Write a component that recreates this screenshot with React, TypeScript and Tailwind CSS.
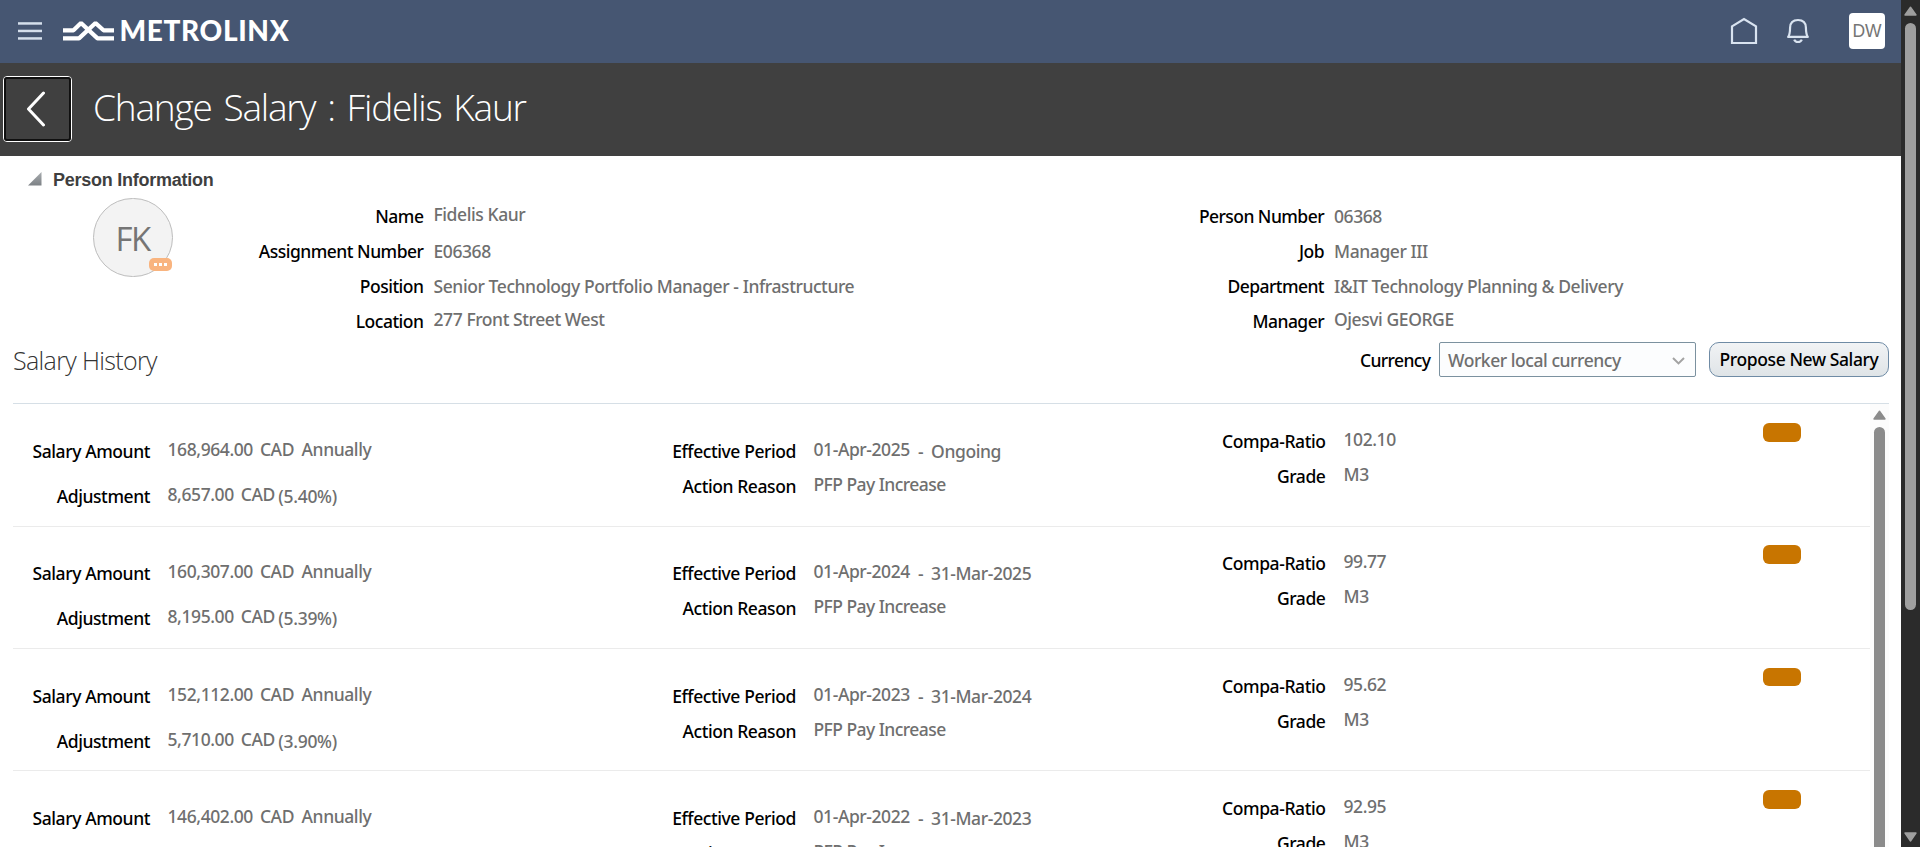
import React from "react";

type FieldProps = {
  label: string;
  labelWidth: string;
  gap: string;
  raised?: boolean;
  children: React.ReactNode;
};

function Field({ label, labelWidth, gap, raised = true, children }: FieldProps) {
  return (
    <div className={`flex h-[26px] shrink-0 items-start ${gap}`}>
      <div className={`${labelWidth} shrink-0 pt-[2px] text-right text-black`}>{label}</div>
      <div className={`flex text-[#6f6f6f] ${raised ? "" : "pt-[2px]"}`}>{children}</div>
    </div>
  );
}

type Salary = {
  amount: string;
  adjustment?: string;
  percent?: string;
  from: string;
  to: string;
  reason: string;
  ratio: string;
  grade: string;
};

const HISTORY: Salary[] = [
  { amount: "168,964.00", adjustment: "8,657.00", percent: "(5.40%)", from: "01-Apr-2025", to: "Ongoing", reason: "PFP Pay Increase", ratio: "102.10", grade: "M3" },
  { amount: "160,307.00", adjustment: "8,195.00", percent: "(5.39%)", from: "01-Apr-2024", to: "31-Mar-2025", reason: "PFP Pay Increase", ratio: "99.77", grade: "M3" },
  { amount: "152,112.00", adjustment: "5,710.00", percent: "(3.90%)", from: "01-Apr-2023", to: "31-Mar-2024", reason: "PFP Pay Increase", ratio: "95.62", grade: "M3" },
  { amount: "146,402.00", from: "01-Apr-2022", to: "31-Mar-2023", reason: "PFP Pay Increase", ratio: "92.95", grade: "M3" },
];

function HistoryRow({ row }: { row: Salary }) {
  return (
    <div className="flex h-[122.33px] shrink-0 border-b border-[#ebebeb]">
      <div className="flex w-[640px] flex-col gap-[19px] pt-[32.73px]">
        <Field label="Salary Amount" labelWidth="w-[137px]" gap="gap-[17.5px]">
          <span>{row.amount}</span>
          <span className="ml-[7px]">CAD</span>
          <span className="ml-[7.5px]">Annually</span>
        </Field>
        {row.adjustment && (
          <Field label="Adjustment" labelWidth="w-[137px]" gap="gap-[17.5px]">
            <span>{row.adjustment}</span>
            <span className="ml-[7px]">CAD</span>
            <span className="ml-[3.5px] pt-[2px] tracking-[-0.3px]">{row.percent}</span>
          </Field>
        )}
      </div>
      <div className="flex w-[560px] flex-col gap-[9px] pt-[32.73px]">
        <Field label="Effective Period" labelWidth="w-[143px]" gap="gap-[17.5px]">
          <span>{row.from}</span>
          <span className="ml-[8px] pt-[2px]">-</span>
          <span className="ml-[8px] pt-[2px]">{row.to}</span>
        </Field>
        <Field label="Action Reason" labelWidth="w-[143px]" gap="gap-[17.5px]"><span className="tracking-[-0.55px]">{row.reason}</span></Field>
      </div>
      <div className="flex w-[550px] flex-col gap-[9px] pt-[22.73px]">
        <Field label="Compa-Ratio" labelWidth="w-[112.5px]" gap="gap-[18px]">{row.ratio}</Field>
        <Field label="Grade" labelWidth="w-[112.5px]" gap="gap-[18px]">{row.grade}</Field>
      </div>
      <div className="mt-[18.9px] h-[18.5px] w-[38px] rounded-[6px] bg-[#c87500]" />
    </div>
  );
}

function Logo() {
  return (
    <div className="flex items-center">
      <svg className="-mt-[2px]" width="51" height="22" viewBox="0 0 51 22" fill="none" stroke="#fff" strokeWidth="4.2" strokeLinejoin="bevel">
        <path d="M0 10.3H10.5L18 3L34.5 18.4H51" />
        <path d="M0 18.4H16L32.5 3L40.5 10.3H51" />
      </svg>
      <span className="-mt-[3px] ml-[6px] font-['Lato',sans-serif] text-[28px] leading-[30px] font-black tracking-[0.65px] text-white">METROLINX</span>
    </div>
  );
}

function PageScrollbar() {
  return (
    <div className="flex w-[19px] shrink-0 flex-col items-center bg-[#2b2b2b] pt-[6px] pb-[5px]">
      <svg width="13" height="10" viewBox="0 0 13 10"><path d="M6.5 1.2L12 9H1Z" fill="#9f9f9f" stroke="#9f9f9f" strokeWidth="1.4" strokeLinejoin="round" /></svg>
      <div className="mt-[7px] h-[587px] w-[11px] rounded-full bg-[#9f9f9f]" />
      <svg className="mt-auto" width="13" height="10" viewBox="0 0 13 10"><path d="M6.5 9L12 1H1Z" fill="#9f9f9f" stroke="#9f9f9f" strokeWidth="1.4" strokeLinejoin="round" /></svg>
    </div>
  );
}

export default function App() {
  return (
    <div className="flex h-[847px] w-[1920px] overflow-hidden bg-white font-['Noto_Sans',sans-serif] text-[17.5px] leading-6 font-medium tracking-[-0.42px] whitespace-nowrap">
      <div className="flex w-[1901px] flex-col">
        <header className="flex h-[63px] shrink-0 items-center bg-[#465672] pr-[16px] pl-[18px]">
          <svg className="-mt-px" width="24" height="18" viewBox="0 0 24 18" fill="#d5dfec">
            <rect y="0.2" width="24" height="2.5" />
            <rect y="7.7" width="24" height="2.5" />
            <rect y="15.2" width="24" height="2.5" />
          </svg>
          <div className="ml-[20.5px] flex"><Logo /></div>
          <svg className="-mt-[2px] ml-auto" width="28" height="28" viewBox="0 0 28 28" fill="none" stroke="#d9e3f0" strokeWidth="2.2">
            <path d="M2 9.4L14 2L26 9.4V26H2Z" />
          </svg>
          <svg className="-mt-[2px] ml-[29px]" width="22" height="26" viewBox="0 0 22 26" fill="none" stroke="#d9e3f0" strokeWidth="2.2">
            <path d="M1.2 18.9H20.8C19.3 17 19 14.5 18.9 9.6C18.8 4.6 15.6 2 11 2S3.2 4.6 3.1 9.6C3 14.5 2.7 17 1.2 18.9Z" strokeLinejoin="round" />
            <path d="M7.2 21.6C8.4 24.8 13.6 24.8 14.8 21.6" />
          </svg>
          <div className="-mt-px ml-[40px] flex h-[36px] w-[36px] items-center justify-center rounded-[4px] bg-white font-['Liberation_Sans',sans-serif] text-[17.5px] font-normal tracking-normal text-[#757575]">DW</div>
        </header>

        <div className="flex h-[93px] shrink-0 bg-[#404040] pl-[3px]">
          <button className="mt-[13px] flex h-[66px] w-[69px] items-center justify-center rounded-[4px] border border-white p-0">
            <span className="flex h-full w-full items-center justify-center rounded-[3px] border-2 border-[#101010]">
              <svg className="-ml-[3px]" width="20" height="36" viewBox="0 0 20 36" fill="none" stroke="#fff" strokeWidth="3" strokeLinecap="round" strokeLinejoin="round">
                <path d="M17.5 2L2.5 18L17.5 34" />
              </svg>
            </span>
          </button>
          <h1 className="mt-[17px] ml-[21px] font-['Open_Sans',sans-serif] text-[37px] leading-[54px] font-light tracking-[-1.2px] text-white [word-spacing:3.4px]">Change Salary : Fidelis Kaur</h1>
        </div>

        <main className="flex min-h-0 flex-1 flex-col pl-[13px]">
          <section className="flex h-[186px] shrink-0 flex-col pl-[15px]">
            <div className="flex h-[38px] items-start">
              <svg className="mt-[15.5px]" width="14" height="14" viewBox="0 0 14 14">
                <defs>
                  <linearGradient id="tri" x1="0" y1="0" x2="0" y2="1">
                    <stop offset="0" stopColor="#a8acaf" />
                    <stop offset="1" stopColor="#7d8286" />
                  </linearGradient>
                </defs>
                <path d="M0 13.5H13.5V0Z" fill="url(#tri)" />
              </svg>
              <h2 className="mt-[12px] ml-[11px] font-['Liberation_Sans',sans-serif] text-[18px] leading-6 font-bold tracking-[-0.25px] text-[#3f3f3f]">Person Information</h2>
            </div>
            <div className="flex h-[148px]">
              <div className="relative mt-[4px] ml-[65px] flex h-[79px] w-[80px] items-center justify-center rounded-full border border-[#bdbdbd] bg-[#f3f3f3] font-['Open_Sans',sans-serif] text-[33px] font-normal tracking-[-1.5px] text-[#757575]">
                <span className="pt-[3px] pr-[1px]">FK</span>
                <svg className="absolute top-[59px] left-[55px]" width="23" height="13" viewBox="0 0 23 13">
                  <rect width="23" height="13" rx="5" fill="#f9b47f" />
                  <rect x="5" y="5" width="3" height="3" fill="#fff" />
                  <rect x="10" y="5" width="3" height="3" fill="#fff" />
                  <rect x="15" y="5" width="3" height="3" fill="#fff" />
                </svg>
              </div>
              <div className="flex w-[900px] flex-col gap-[9px] pt-[8px]">
                <Field label="Name" labelWidth="w-[250.5px] tracking-[-0.5px]" gap="gap-[10px]">Fidelis Kaur</Field>
                <Field label="Assignment Number" labelWidth="w-[250.5px] tracking-[-0.5px]" gap="gap-[10px]" raised={false}>E06368</Field>
                <Field label="Position" labelWidth="w-[250.5px] tracking-[-0.5px]" gap="gap-[10px]" raised={false}>Senior Technology Portfolio Manager - Infrastructure</Field>
                <Field label="Location" labelWidth="w-[250.5px] tracking-[-0.5px]" gap="gap-[10px]">277 Front Street West</Field>
              </div>
              <div className="flex flex-col gap-[9px] pt-[8px]">
                <Field label="Person Number" labelWidth="w-[251px] tracking-[-0.55px]" gap="gap-[10px]" raised={false}>06368</Field>
                <Field label="Job" labelWidth="w-[251px] tracking-[-0.55px]" gap="gap-[10px]" raised={false}>Manager III</Field>
                <Field label="Department" labelWidth="w-[251px] tracking-[-0.55px]" gap="gap-[10px]" raised={false}>I&amp;IT Technology Planning &amp; Delivery</Field>
                <Field label="Manager" labelWidth="w-[251px] tracking-[-0.55px]" gap="gap-[10px]">Ojesvi GEORGE</Field>
              </div>
            </div>
          </section>

          <div className="flex h-[35px] w-[1876px] shrink-0 items-center">
            <h2 className="mt-px font-['Open_Sans',sans-serif] text-[25px] font-light tracking-[-0.65px] text-[#333]">Salary History</h2>
            <span className="mt-px ml-auto tracking-[-0.6px] text-black">Currency</span>
            <div className="ml-[8.5px] flex h-[35px] w-[257px] items-center justify-between rounded-[2px] border border-[#7b919f] bg-[#fcfdfe] pr-[10px] pl-[8px] tracking-[-0.45px] text-[#6f6f6f]">
              <span className="mt-px">Worker local currency</span>
              <svg className="mt-[3px]" width="13" height="8" viewBox="0 0 13 8" fill="none" stroke="#a3a3a3" strokeWidth="2"><path d="M1 1L6.5 6.4L12 1" /></svg>
            </div>
            <button className="ml-[13px] flex h-[35px] w-[180px] items-start justify-center rounded-[10px] border border-[#6f8ba5] bg-linear-to-b from-[#f1f3f5] to-[#dfe4e7] pt-[4px] tracking-[-0.4px] text-black">Propose New Salary</button>
          </div>

          <section className="mt-[26px] flex min-h-0 w-[1876px] flex-1 border-t border-[#d6dfe6]">
            <div className="flex w-[1857px] flex-col overflow-hidden pt-[0.27px]">
              {HISTORY.map((row) => (
                <HistoryRow key={row.from} row={row} />
              ))}
            </div>
            <div className="flex w-[19px] flex-col items-center overflow-hidden bg-[#fcfcfc] pt-[6px]">
              <svg className="shrink-0" width="13" height="10" viewBox="0 0 13 10"><path d="M6.5 1.2L12 9H1Z" fill="#8b8b8b" stroke="#8b8b8b" strokeWidth="1.4" strokeLinejoin="round" /></svg>
              <div className="mt-[7px] h-[430px] w-[11px] shrink-0 rounded-t-full bg-[#8b8b8b]" />
            </div>
          </section>
        </main>
      </div>
      <PageScrollbar />
    </div>
  );
}
